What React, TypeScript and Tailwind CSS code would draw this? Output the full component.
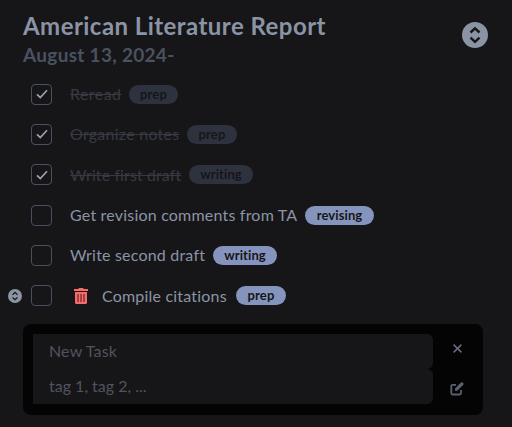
const sans = "font-['Lato','Open_Sans',sans-serif]";

type Task = {
  label: string;
  labelClass: string;
  tag: string;
  tagClass: string;
  done?: boolean;
  active?: boolean;
};

const tasks: Task[] = [
  { label: 'Reread', labelClass: 'w-[51px] tracking-[0.45px]', tag: 'prep', tagClass: 'w-[49px]', done: true },
  { label: 'Organize notes', labelClass: 'w-[109px] tracking-[0.25px]', tag: 'prep', tagClass: 'w-[50px]', done: true },
  { label: 'Write first draft', labelClass: 'w-[111px] tracking-[0.1px]', tag: 'writing', tagClass: 'w-[64px]', done: true },
  { label: 'Get revision comments from TA', labelClass: 'w-[227px] tracking-[0.2px]', tag: 'revising', tagClass: 'w-[69px]' },
  { label: 'Write second draft', labelClass: 'w-[135px] tracking-[0.2px]', tag: 'writing', tagClass: 'w-[64px]' },
  { label: 'Compile citations', labelClass: 'w-[126px] tracking-[0.2px]', tag: 'prep', tagClass: 'w-[50px]', active: true },
];

function SortIcon({ className }: { className: string }) {
  return (
    <svg viewBox="0 0 26 26" className={className}>
      <circle cx="13" cy="13" r="13" fill="#8b94a5" />
      <path d="M8.500 10.500 13 6.300l4.500 4.200M8.500 15.700 13 19.900l4.500-4.200" fill="none" stroke="#161618" strokeWidth="2.400" />
    </svg>
  );
}

function TrashIcon() {
  return (
    <svg viewBox="0 0 14 16" className="h-4 w-3.5">
      <path d="M0 1h4.2l.8-1h4l.8 1H14v2H0z" fill="#f96b6b" />
      <path d="M1 4h12v10.5q0 1.5-1.5 1.5h-9Q1 16 1 14.500z" fill="#f96b6b" />
      <path d="M4 6v8M7 6v8M10 6v8" stroke="#963f42" strokeWidth="1.800" />
    </svg>
  );
}

function TaskRow({ task }: { task: Task }) {
  return (
    <li className="flex h-[40.300px] items-center">
      <div className="flex w-[23px] shrink-0 justify-start">
        {task.active && <SortIcon className="size-[14px]" />}
      </div>
      <div className="flex size-[21px] shrink-0 items-center justify-center rounded-[4px] border border-[#4b5060]">
        {task.done && (
          <svg viewBox="0 0 12 10" className="h-[10px] w-3">
            <path d="M1 5.300 4.300 8.500 11 1.200" fill="none" stroke="#9aa3b4" strokeWidth="1.700" />
          </svg>
        )}
      </div>
      <div className="ml-[18px] flex items-center">
        {task.active && (
          <div className="mr-[14px] ml-1">
            <TrashIcon />
          </div>
        )}
        <span className={`${task.labelClass} text-base leading-6 whitespace-nowrap ${task.done ? 'text-[#373a43] line-through' : 'text-[#8b94a5]'}`}>
          {task.label}
        </span>
        <span className={`${task.tagClass} ml-2 flex h-[19px] items-center justify-center rounded-full pt-px text-[13px] font-bold tracking-[0.1px] text-[#161618] ${task.done ? 'bg-[#2e323f]' : 'bg-[#8594bd]'}`}>
          {task.tag}
        </span>
      </div>
    </li>
  );
}

export default function App() {
  return (
    <main className={`h-[427px] w-[512px] overflow-hidden bg-[#161618] ${sans}`}>
      <header className="flex h-[74px] justify-between pr-6 pl-[23px]">
        <div className="pt-[10px] font-bold whitespace-nowrap">
          <h1 className="text-2xl leading-8 tracking-[0.45px] text-[#8b94a5]">American Literature Report</h1>
          <h2 className="text-[19px] leading-[25px] tracking-[0.3px] text-[#4a5160]">August 13, 2024-</h2>
        </div>
        <SortIcon className="mt-[22px] size-[26px]" />
      </header>
      <ul className="pl-2">
        {tasks.map((task) => (
          <TaskRow key={task.label} task={task} />
        ))}
      </ul>
      <section className="mt-[8px] ml-[23px] flex h-[91px] w-[460px] rounded-lg bg-[#040404] p-[10px]">
        <div className="w-[400px] text-base text-[#50535e]">
          <div className="flex h-[35px] items-center rounded-r-md bg-[#161618] pl-4 tracking-[0.15px]">New Task</div>
          <div className="flex h-[35px] items-center rounded-r-md bg-[#161618] pl-4">tag 1, tag 2, ...</div>
        </div>
        <div className="ml-[17px] flex flex-col items-center pt-[10px]">
          <svg viewBox="0 0 9 9" className="size-[9px]">
            <path d="m.6.6 7.800 7.800M8.400.6.6 8.400" stroke="#666c7c" strokeWidth="1.500" />
          </svg>
          <svg viewBox="0 0 14 14" className="mt-[29px] size-[14px]">
            <path d="M6 2.800H2.800Q1.300 2.800 1.300 4.300v6.700q0 1.500 1.500 1.500h6.700q1.500 0 1.500-1.500V8" fill="none" stroke="#596170" strokeWidth="1.800" />
            <path d="m5 6.500 6-6q.8-.6 1.600 0l.7.7q.6.8 0 1.600l-6 6H5z" fill="#596170" />
          </svg>
        </div>
      </section>
    </main>
  );
}
